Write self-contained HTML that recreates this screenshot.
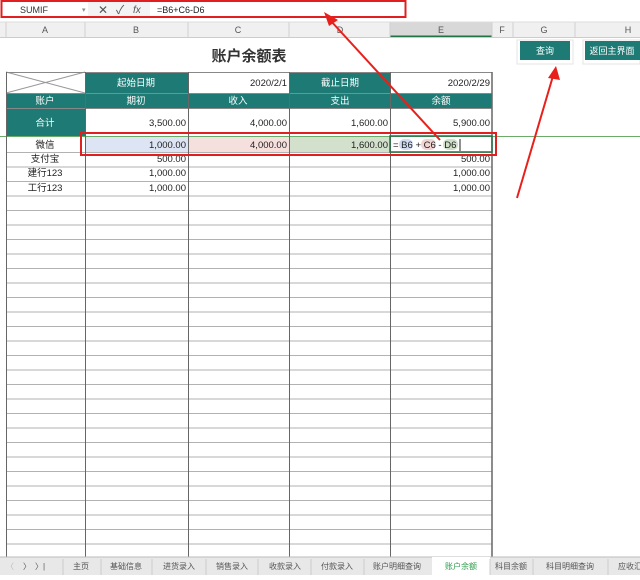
<!DOCTYPE html>
<html><head><meta charset="utf-8"><style>
body{margin:0;width:640px;height:575px;overflow:hidden;background:#fff}
svg text{font-family:"Liberation Sans","Noto Sans CJK SC",sans-serif}
</style></head><body>
<svg width="640" height="575" viewBox="0 0 640 575" xmlns="http://www.w3.org/2000/svg">
<rect x="0" y="0" width="640" height="22" fill="#fff"/>
<rect x="88" y="2" width="62" height="16" fill="#f3f3f3"/>
<text x="20" y="13" font-size="9" fill="#333" font-family="Liberation Mono">SUMIF</text>
<text x="82" y="12" font-size="7" fill="#888">▾</text>
<text x="98" y="14" font-size="12" fill="#555">✕</text>
<text x="116" y="14" font-size="12" fill="#555">✓</text>
<text x="133" y="13" font-size="10" font-style="italic" fill="#555" font-family="Liberation Serif">fx</text>
<text x="157" y="13" font-size="9" fill="#222">=B6+C6-D6</text>
<rect x="1.5" y="1" width="404" height="16" fill="none" stroke="#e02020" stroke-width="2"/>
<rect x="0" y="22" width="640" height="15" fill="#f0f0f0"/>
<rect x="390" y="22" width="102" height="15" fill="#d8d8d8"/>
<line x1="390" y1="36.5" x2="492" y2="36.5" stroke="#217346" stroke-width="2"/>
<line x1="0" y1="37.5" x2="640" y2="37.5" stroke="#ccc"/>
<g stroke="#d0d0d0"><line x1="6" y1="22" x2="6" y2="37"/><line x1="85" y1="22" x2="85" y2="37"/><line x1="188" y1="22" x2="188" y2="37"/><line x1="289" y1="22" x2="289" y2="37"/><line x1="390" y1="22" x2="390" y2="37"/><line x1="492" y1="22" x2="492" y2="37"/><line x1="513" y1="22" x2="513" y2="37"/><line x1="575" y1="22" x2="575" y2="37"/></g>
<g font-size="9" fill="#555" text-anchor="middle"><text x="45" y="33">A</text><text x="136" y="33">B</text><text x="238" y="33">C</text><text x="340" y="33">D</text><text x="441" y="33">E</text><text x="502" y="33">F</text><text x="544" y="33">G</text><text x="628" y="33">H</text></g>
<line x1="0" y1="22" x2="640" y2="22" stroke="#ddd"/>
<text x="249" y="61" font-size="15" font-weight="bold" fill="#333" text-anchor="middle">账户余额表</text>
<rect x="517" y="40" width="56" height="24" fill="#fff" stroke="#e4e4e4"/>
<rect x="520" y="41" width="50" height="19" fill="#1e7a74"/>
<text x="545" y="54" font-size="9" fill="#fff" text-anchor="middle">查询</text>
<rect x="583" y="40" width="57" height="24" fill="#fff" stroke="#e4e4e4"/>
<rect x="585" y="41" width="55" height="19" fill="#1e7a74"/>
<text x="612" y="54" font-size="9" fill="#fff" text-anchor="middle">返回主界面</text>
<rect x="85" y="72" width="103" height="21" fill="#1e7a74"/>
<rect x="289" y="72" width="101" height="21" fill="#1e7a74"/>
<rect x="6" y="93" width="486" height="15" fill="#1e7a74"/>
<rect x="6" y="108" width="79" height="28" fill="#1e7a74"/>
<rect x="85" y="137" width="103" height="15" fill="#dde4f4"/>
<rect x="188" y="137" width="101" height="15" fill="#f6e0de"/>
<rect x="289" y="137" width="101" height="15" fill="#d2e0cc"/>
<g font-size="9.5" fill="#fff" text-anchor="middle">
<text x="136" y="86">起始日期</text><text x="340" y="86">截止日期</text>
<text x="45" y="104">账户</text><text x="136" y="104">期初</text><text x="238" y="104">收入</text><text x="340" y="104">支出</text><text x="441" y="104">余额</text>
<text x="45" y="126">合计</text></g>
<line x1="6" y1="72" x2="85" y2="93" stroke="#999"/><line x1="6" y1="93" x2="85" y2="72" stroke="#999"/>
<g stroke="#888" stroke-width="1">
<line x1="6" y1="72.5" x2="492" y2="72.5"/><line x1="6" y1="93.5" x2="492" y2="93.5"/><line x1="6" y1="108.5" x2="492" y2="108.5"/><line x1="6" y1="136.5" x2="492" y2="136.5"/>
</g>
<g stroke="#999" stroke-width="0.8" id="rows"></g>
<line x1="0" y1="136.5" x2="640" y2="136.5" stroke="#6aab6a"/>
<g stroke="#666" stroke-width="1">
<line x1="6.5" y1="72" x2="6.5" y2="557"/><line x1="85.5" y1="72" x2="85.5" y2="557"/><line x1="188.5" y1="72" x2="188.5" y2="557"/><line x1="289.5" y1="72" x2="289.5" y2="557"/><line x1="390.5" y1="72" x2="390.5" y2="557"/><line x1="492" y1="72" x2="492" y2="557" stroke-width="1.5"/>
</g>
<g font-size="9.5" fill="#222" text-anchor="end">
<text x="287" y="86">2020/2/1</text><text x="490" y="86">2020/2/29</text>
<text x="186" y="126">3,500.00</text><text x="287" y="126">4,000.00</text><text x="388" y="126">1,600.00</text><text x="490" y="126">5,900.00</text>
<text x="186" y="148">1,000.00</text><text x="287" y="148">4,000.00</text><text x="388" y="148">1,600.00</text>
<text x="186" y="162">500.00</text><text x="490" y="162">500.00</text>
<text x="186" y="176">1,000.00</text><text x="490" y="176">1,000.00</text>
<text x="186" y="191">1,000.00</text><text x="490" y="191">1,000.00</text>
</g>
<g font-size="9.5" fill="#222" text-anchor="middle">
<text x="45" y="148">微信</text><text x="45" y="162">支付宝</text><text x="45" y="176">建行123</text><text x="45" y="191">工行123</text></g>
<rect x="391" y="137" width="100" height="15" fill="#fff"/>
<rect x="399" y="139" width="14" height="11" rx="5" fill="#cfdcf3"/>
<rect x="421" y="139" width="15" height="11" rx="5" fill="#f1d4d2"/>
<rect x="443" y="139" width="15" height="11" rx="5" fill="#cfe0c8"/>
<text x="393" y="148" font-size="9.5" fill="#222">= B6 + C6 - D6</text>
<line x1="460" y1="139" x2="460" y2="151" stroke="#222"/>
<rect x="390" y="136" width="102" height="16" fill="none" stroke="#217346" stroke-width="1.5"/>
<rect x="81" y="133" width="415" height="22" fill="none" stroke="#e02020" stroke-width="2"/>
<g stroke="#e8201c" stroke-width="2" fill="#e8201c">
<line x1="440" y1="140" x2="330" y2="20"/>
<polygon points="324,12 338,20 329,26" stroke="none"/>
<line x1="517" y1="198" x2="553" y2="76"/>
<polygon points="556,66 560,80 548,78" stroke="none"/>
</g>
<rect x="0" y="557" width="640" height="18" fill="#e8e8e8"/>
<line x1="0" y1="557" x2="640" y2="557" stroke="#bbb"/>
<g font-size="8" fill="#555" text-anchor="middle">
<text x="10" y="569" fill="#bbb">〈</text><text x="27" y="569">〉</text><text x="40" y="569">〉|</text>
<text x="81" y="569">主页</text><text x="126" y="569">基础信息</text><text x="179" y="569">进货录入</text><text x="232" y="569">销售录入</text><text x="285" y="569">收款录入</text><text x="337" y="569">付款录入</text><text x="397" y="569">账户明细查询</text></g>
<rect x="432" y="557" width="58" height="18" fill="#fff"/>
<g font-size="8" fill="#555" text-anchor="middle">
<text x="461" y="569" fill="#2a9a4a">账户余额</text><text x="511" y="569">科目余额</text><text x="570" y="569">科目明细查询</text><text x="630" y="569">应收汇</text></g>
<g stroke="#ccc"><line x1="63" y1="559" x2="63" y2="575"/><line x1="101" y1="559" x2="101" y2="575"/><line x1="152" y1="559" x2="152" y2="575"/><line x1="206" y1="559" x2="206" y2="575"/><line x1="258" y1="559" x2="258" y2="575"/><line x1="311" y1="559" x2="311" y2="575"/><line x1="364" y1="559" x2="364" y2="575"/><line x1="490" y1="559" x2="490" y2="575"/><line x1="533" y1="559" x2="533" y2="575"/><line x1="608" y1="559" x2="608" y2="575"/></g>
</svg>
<script>
var g=document.getElementById('rows'),s='';
for(var i=0;i<28;i++){var y=152.5+i*14.5;if(y>557)break;s+='<line x1="6" y1="'+y+'" x2="492" y2="'+y+'"/>';}
g.innerHTML=s;
</script>
</body></html>
